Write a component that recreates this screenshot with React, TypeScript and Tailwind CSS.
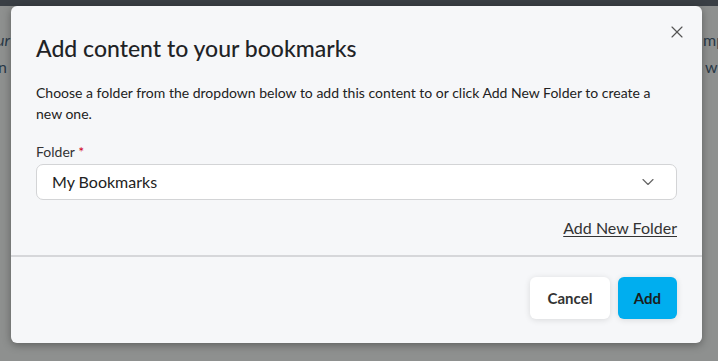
import { ChevronDown, X } from 'lucide-react';

export default function App() {
  return (
    <div className="relative w-[718px] h-[361px] overflow-hidden bg-[#8e908f] font-['Lato','Liberation_Sans',sans-serif]">
      {/* page behind the overlay */}
      <div className="absolute inset-x-0 top-0 h-[6px] bg-[#3a3f45]" />
      <div className="absolute left-[-4px] top-[28px] text-[16px] italic text-[#2a3a48]">ur</div>
      <div className="absolute left-[-2px] top-[55px] text-[16px] text-[#2a3a48]">n</div>
      <div className="absolute left-[703px] top-[28px] text-[16px] text-[#2a3a48]">mp</div>
      <div className="absolute left-[705px] top-[55px] text-[16px] text-[#2a3a48]">w</div>

      <div className="relative ml-[11px] mt-[6px] w-[691px] h-[337px] rounded-[6px] bg-[#f6f7f9] shadow-[0_2px_8px_rgba(0,0,0,0.35)] flex flex-col">
        <button className="absolute right-[15px] top-[16px] text-[#555]">
          <X size={20} strokeWidth={1.4} />
        </button>

        <div className="px-[25px] pt-[27px]">
          <h2 className="text-[23px] leading-[30px] font-medium text-[#1f2326]">
            Add content to your bookmarks
          </h2>
          <p className="mt-[19px] text-[14px] leading-[21px] text-[#222]">
            Choose a folder from the dropdown below to add this content to or click Add New Folder to create a new one.
          </p>

          <div className="mt-[19px] text-[14px] leading-[18px] text-[#333]">
            Folder <span className="text-[#d0021b]">*</span>
          </div>
          <div className="mt-[3px] h-[36px] flex items-center justify-between rounded-[7px] border border-[#d3d4d6] bg-white pl-[15px] pr-[18px]">
            <span className="text-[16px] text-[#222]">My Bookmarks</span>
            <ChevronDown size={20} strokeWidth={1.4} className="text-[#666]" />
          </div>

          <div className="mt-[18px] flex justify-end">
            <a className="text-[16px] leading-[20px] text-[#333] underline underline-offset-2">Add New Folder</a>
          </div>
        </div>

        <div className="mt-[17px] h-[2px] bg-[#d6d7da]" />

        <div className="flex justify-end gap-[8px] px-[25px] pt-[20px]">
          <button className="h-[42px] w-[80px] rounded-[6px] bg-white text-[15px] font-bold text-[#333] shadow-[0_1px_6px_rgba(0,0,0,0.12)]">
            Cancel
          </button>
          <button className="h-[42px] w-[59px] rounded-[6px] bg-[#00aeef] text-[15px] font-bold text-[#1a1d20] shadow-[0_1px_6px_rgba(0,0,0,0.12)]">
            Add
          </button>
        </div>
      </div>
    </div>
  );
}
